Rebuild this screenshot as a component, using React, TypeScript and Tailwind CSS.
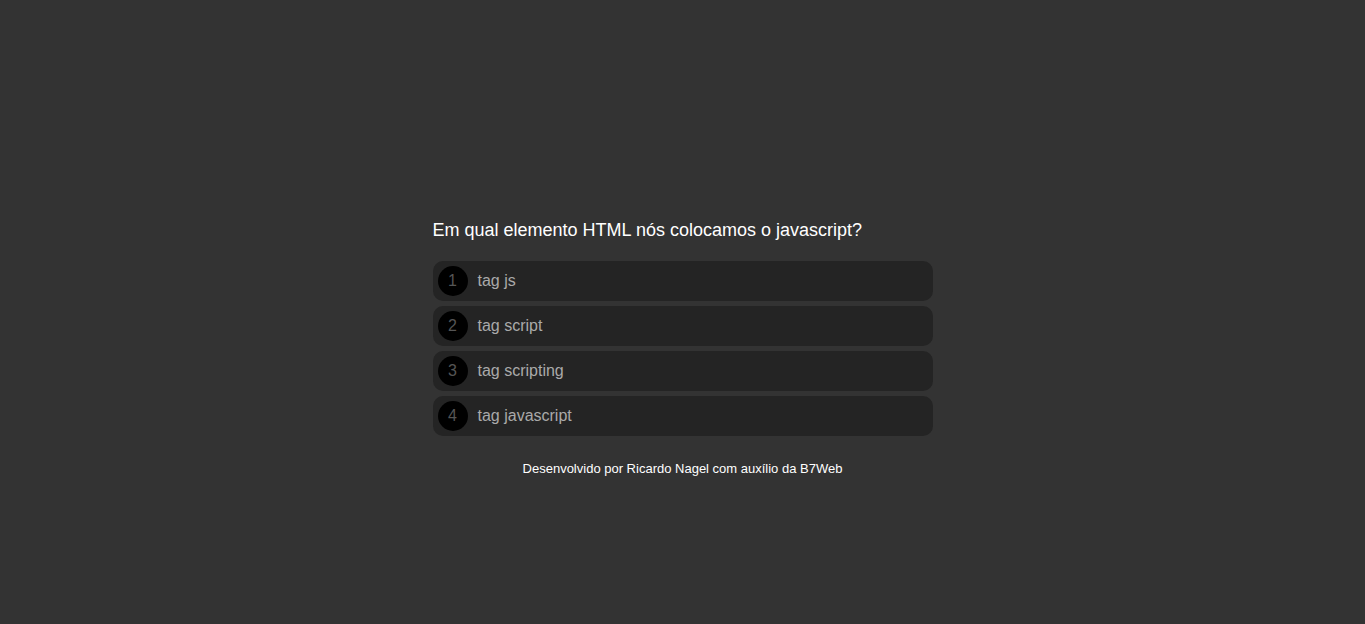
export default function App() {
  const answers = ["tag js", "tag script", "tag scripting", "tag javascript"];
  return (
    <div className="min-h-screen bg-[#333333] flex justify-center" style={{ fontFamily: '"Liberation Sans", Arial, sans-serif' }}>
      <div className="w-[500px] pt-[220px]">
        <div className="text-white text-[18px] leading-[21px] mb-[20px]">Em qual elemento HTML nós colocamos o javascript?</div>
        <div className="flex flex-col gap-[5px]">
          {answers.map((a, i) => (
            <div key={i} className="h-[40px] bg-[#242424] rounded-[10px] flex items-center px-[5px]">
              <div className="w-[30px] h-[30px] rounded-full bg-black text-[#555555] text-[16px] flex items-center justify-center mr-[10px]">{i + 1}</div>
              <div className="text-[#aaaaaa] text-[16px]">{a}</div>
            </div>
          ))}
        </div>
        <div className="text-white text-[13px] text-center mt-[23px]">Desenvolvido por Ricardo Nagel com auxílio da B7Web</div>
      </div>
    </div>
  );
}
